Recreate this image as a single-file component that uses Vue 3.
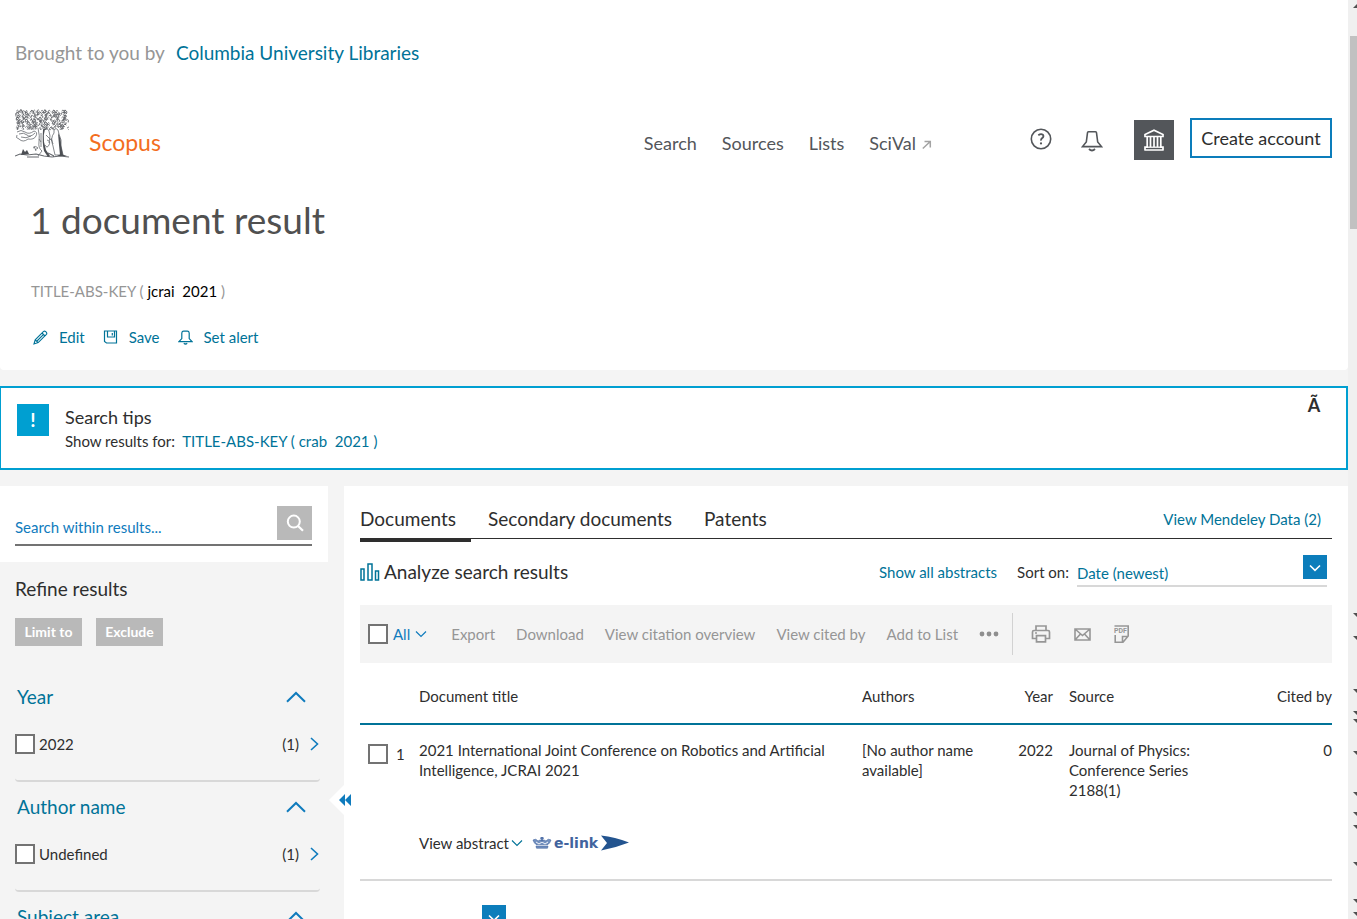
<script setup>
import { ref } from 'vue'

const navLinks = ['Search', 'Sources', 'Lists']
const filters = ref([
  { title: 'Year', option: '2022', count: 1, checked: false },
  { title: 'Author name', option: 'Undefined', count: 1, checked: false },
  { title: 'Subject area', option: 'Physics and Astronomy', count: 1, checked: false }
])
const tools = ['Export', 'Download', 'View citation overview', 'View cited by', 'Add to List']
const railMarks = [613, 636, 689, 711, 719, 751, 792, 812, 825, 862, 899, 912]
const within = ref('')
const sort = ref('Date (newest)')

// Foliage of the tree emblem: rows of small curls with a repeating wobble.
function foliage() {
  let d = ''
  let seed = 7
  const rnd = () => {
    seed = (seed * 73 + 41) % 997
    return seed / 997
  }
  for (let row = 0; row < 8; row++) {
    for (let col = 0; col < 19; col++) {
      const x = 0.5 + col * 2.8 + rnd() * 1.4
      const y = 1.5 + row * 2.4 + rnd() * 1.2
      const r = 0.8 + rnd() * 0.7
      const s = rnd() > 0.5 ? 1 : -1
      d += `M${x.toFixed(1)} ${y.toFixed(1)}q${(r * s).toFixed(1)} ${(-r * 1.6).toFixed(1)} ${(2 * r * s).toFixed(1)} 0t${(-r * s).toFixed(1)} ${r.toFixed(1)}`
    }
  }
  return d
}
const leaves = foliage()
</script>

<template>
  <div class="shell">
    <div class="page">
      <header class="top">
        <p class="brought">Brought to you by <a href="#">Columbia University Libraries</a></p>
        <div class="bar">
          <a class="brand" href="#" aria-label="Scopus home">
            <svg class="tree" viewBox="0 0 54 50" aria-hidden="true">
              <path :d="leaves" fill="none" stroke="#5a5d62" stroke-width=".8" />
              <g fill="none" stroke="#66696e" stroke-width=".8">
                <path d="M2 23q4-3 8 0t9-1q4 1 2 5t-8 3q-5 4-9 0-4-1-2-4M4 25q5-2 8 1t8-2M6 28q5 2 10-1M23 19q2 8 1 14t3 9l-4 5M24 30l2 3M26 24v14" />
                <path d="M39 21q2-3 4 0l1 4q3 6 2 12l2 9h-8l-2-9q-3-8 1-13zM30 21q2-3 4 1l1 5-1 7M31 26l6 6M36 29l2 6M32 31q4 1 2 5t-4 0M18 39q3-3 5 0l-3 2M19 37l2 5" />
                <path d="M0 47l5-2 7 1 9-1 8 2 8 1 8-1 9 1M12 48h12M33 44l6 3" stroke-width="1.1" />
              </g>
              <path d="M28 21q1-2 2-1-2 6-1 13l2 8 4 6-2 1-4-6q-2-8-1-21zM43 24q3 5 3 12l2 10h-3l-1-10zM6 46l2-6 2 3 2-2 2 4zM42 47l4-2 6 2z" fill="#4c4f54" />
            </svg>
            <span>Scopus</span>
          </a>
          <nav class="nav">
            <a v-for="l in navLinks" :key="l" href="#">{{ l }}</a>
            <a href="#">SciVal
              <svg class="out" width="10" height="10" viewBox="0 0 10 10" aria-hidden="true"><path d="M.8 8.5L8 1.7M2.5 1.5H8.3V7.6" fill="none" stroke="#a3a3a3" stroke-width="1.5" /></svg>
            </a>
          </nav>
          <div class="account">
            <button class="icon" aria-label="Help">
              <svg width="22" height="22" viewBox="0 0 22 22"><circle cx="11" cy="11" r="9.7" fill="none" stroke="#53565a" stroke-width="1.6" /><path d="M8.3 7.3Q11 5.2 12.8 6.700 14.4 8.6 12 10.2 10.9 11 11 12.6" fill="none" stroke="#53565a" stroke-width="1.8" /><circle cx="11" cy="15.4" r="1.1" fill="#53565a" /></svg>
            </button>
            <button class="icon bell" aria-label="Alerts">
              <svg width="22" height="22" viewBox="0 0 22 22"><path d="M1.5 16.600H20.500L16.700 12 15.500 2.800Q15.500 1.800 14.500 1.800H7.500Q6.500 1.800 6.500 2.800L5.300 12Z" fill="none" stroke="#53565a" stroke-width="1.600" /><path d="M8 19Q11 22 14 19" fill="none" stroke="#53565a" stroke-width="1.800" /></svg>
            </button>
            <button class="inst" aria-label="Institution">
              <svg width="20" height="22" viewBox="0 0 20 22"><path d="M1 7.500V5.600L10 1.200l9 4.400V7.500ZM1 21v-2.800h2.200V7.500M19 21v-2.800h-2.200V7.500M.300 21h19.400" fill="none" stroke="#fff" stroke-width="1.700" /><path d="M2 18.200h16" stroke="#fff" stroke-width="1.300" /><path d="M6.500 8v10M10 8v10M13.500 8v10" stroke="#fff" stroke-width="1.700" /></svg>
            </button>
            <button class="create">Create account</button>
          </div>
        </div>
        <h1>1 document result</h1>
        <p class="query">TITLE-ABS-KEY ( <b>jcrai &nbsp;2021</b> )</p>
        <div class="actions">
          <button>
            <svg width="15" height="15" viewBox="0 0 15 15" aria-hidden="true"><path d="M1 14L2.2 9.8 10.6 1.4Q11.6.6 12.7 1.7L13.4 2.4Q14.2 3.4 13.4 4.3L5.2 12.6ZM9 3l3 3M2.4 10l2.7 2.6M4 11L10.6 4.4" fill="none" stroke="currentColor" stroke-width="1.100" /></svg>Edit
          </button>
          <button>
            <svg width="15" height="15" viewBox="0 0 15 15" aria-hidden="true"><path d="M1.500 1H13.500V13H3.500L1.500 11.500ZM4.500 1V7H11.500V1M9.300 3v2.400" fill="none" stroke="currentColor" stroke-width="1.200" /></svg>Save
          </button>
          <button>
            <svg width="15" height="15" viewBox="0 0 15 15" aria-hidden="true"><path d="M1 11.600H14L11.200 8.600V3Q11 1.200 9.400 1.200H5.600Q4 1.200 3.800 3V8.600ZM5.800 13.200Q7.500 14.800 9.200 13.200" fill="none" stroke="currentColor" stroke-width="1.200" /></svg>Set alert
          </button>
        </div>
      </header>

      <section class="tips">
        <span class="bang">!</span>
        <div class="tiptext">
          <h2>Search tips</h2>
          <p>Show results for: &nbsp;<a href="#">TITLE-ABS-KEY ( crab &nbsp;2021 )</a></p>
        </div>
        <button class="close" aria-label="Close tips">Ã</button>
      </section>

      <div class="columns">
        <aside>
          <form class="within" @submit.prevent>
            <div class="field">
              <input v-model="within" type="text" placeholder="Search within results..." aria-label="Search within results" />
              <button aria-label="Search">
                <svg width="18" height="18" viewBox="0 0 18 18"><circle cx="7.800" cy="7.600" r="6" fill="none" stroke="#fff" stroke-width="2" /><path d="M12 12l5 4.800" stroke="#fff" stroke-width="2.200" /></svg>
              </button>
            </div>
          </form>
          <div class="refine">
            <h2>Refine results</h2>
            <div class="limit"><button>Limit to</button><button>Exclude</button></div>
            <section v-for="f in filters" :key="f.title" class="facet">
              <button class="facethead">{{ f.title }}
                <svg width="20" height="12" viewBox="0 0 20 12" aria-hidden="true"><path d="M1 10.800L10 2l9 8.800" fill="none" stroke="#0f7bbd" stroke-width="2" /></svg>
              </button>
              <div class="option">
                <label><input v-model="f.checked" type="checkbox" />{{ f.option }}</label>
                <a href="#">({{ f.count }})
                  <svg width="9" height="14" viewBox="0 0 9 14" aria-hidden="true"><path d="M1 1l6.500 6L1 13" fill="none" stroke="#0f7bbd" stroke-width="1.600" /></svg>
                </a>
              </div>
            </section>
          </div>
        </aside>

        <main>
          <button class="collapse" aria-label="Collapse refine panel">
            <svg width="24" height="30" viewBox="0 0 24 30"><path d="M0 15L15 0v30Z" fill="#fff" /><path d="M10 15l6-6v12ZM16 15l6-6v12Z" fill="#0f7bbd" /></svg>
          </button>
          <div class="tabs">
            <a class="on" href="#">Documents</a>
            <a href="#">Secondary documents</a>
            <a href="#">Patents</a>
            <a class="mendeley" href="#">View Mendeley Data (2)</a>
          </div>
          <div class="analyze">
            <a class="chart" href="#">
              <svg width="20" height="18" viewBox="0 0 20 18" aria-hidden="true"><path d="M1 6h3v11H1ZM8 1h4v16H8ZM15.500 8h3v9h-3Z" fill="none" stroke="#007398" stroke-width="1.500" /></svg>Analyze search results
            </a>
            <a class="abstracts" href="#">Show all abstracts</a>
            <label for="sort">Sort on:</label>
            <div class="select">
              <select id="sort" v-model="sort">
                <option>Date (newest)</option>
                <option>Date (oldest)</option>
              </select>
              <svg class="chev" width="24" height="24" viewBox="0 0 24 24" aria-hidden="true"><path fill="#0c7dbb" d="M0 0h24v24H0z" /><path d="M7 10.500l5 4.800 5-4.800" fill="none" stroke="#fff" stroke-width="1.600" /></svg>
            </div>
          </div>
          <div class="toolbar">
            <label class="all"><input type="checkbox" />All
              <svg width="12" height="8" viewBox="0 0 12 8" aria-hidden="true"><path d="M1 1.500l5 5 5-5" fill="none" stroke="#0f7bbd" stroke-width="1.200" /></svg>
            </label>
            <button v-for="t in tools" :key="t">{{ t }}</button>
            <button aria-label="More">
              <svg width="20" height="6" viewBox="0 0 20 6"><g fill="#8e8e8e"><circle cx="3" cy="3" r="2.400" /><circle cx="10" cy="3" r="2.400" /><circle cx="17" cy="3" r="2.400" /></g></svg>
            </button>
            <div class="outputs">
              <button aria-label="Print">
                <svg width="20" height="18" viewBox="0 0 20 18"><path d="M5 13.500H1.500V7Q1.500 5.500 3 5.500H17Q18.500 5.500 18.500 7V13.500H15M5 5.500V1H15V5.500M5.500 10.700H14.500V16.800H5.500ZM4 8h2" fill="none" stroke="#969696" stroke-width="1.700" /></svg>
              </button>
              <button aria-label="Email">
                <svg width="17" height="13" viewBox="0 0 17 13"><path d="M1 1H16V12H1ZM1 1l7.500 6.500L16 1M1 12l5.500-6M16 12l-5.500-6" fill="none" stroke="#969696" stroke-width="1.600" /></svg>
              </button>
              <button aria-label="Save as PDF">
                <svg width="16" height="18" viewBox="0 0 16 18"><path d="M.5 1H14.200V11L9 17.200H1.200V10M8.500 17V11.500H14.200" fill="none" stroke="#969696" stroke-width="1.600" /><text class="pdf" x="0" y="8">PDF</text></svg>
              </button>
            </div>
          </div>
          <table>
            <thead>
              <tr><th class="pick"></th><th>Document title</th><th class="authors">Authors</th><th class="year">Year</th><th class="source">Source</th><th class="cited">Cited by</th></tr>
            </thead>
            <tbody>
              <tr>
                <td><label class="rowpick"><input type="checkbox" />1</label></td>
                <td>2021 International Joint Conference on Robotics and Artificial Intelligence, JCRAI 2021</td>
                <td>[No author name available]</td>
                <td class="year">2022</td>
                <td class="source">Journal of Physics: Conference Series 2188(1)</td>
                <td class="cited">0</td>
              </tr>
              <tr class="links">
                <td></td>
                <td colspan="5">
                  <div class="linkrow">
                    <button>View abstract
                      <svg width="12" height="8" viewBox="0 0 12 8" aria-hidden="true"><path d="M1 1.500l5 5 5-5" fill="none" stroke="#007398" stroke-width="1.100" /></svg>
                    </button>
                    <a class="elink" href="#">
                      <svg width="20" height="12" viewBox="0 0 20 12" aria-hidden="true"><path d="M1 3q3-2 5 1l2-1 1 1h2l1-1 2 1q2-3 5-1-1 3-3 4.500H4Q2 6 1 3ZM9 0h2v4H9ZM8 1.300h4M4 9h12l-.5 2.200h-11Z" fill="#7391c0" stroke="#41639e" stroke-width=".6" /><path d="M4 5l3 2 3-2 3 2 3-2" fill="none" stroke="#fff" stroke-width=".9" /></svg>
                      <span>e-link</span>
                      <svg width="30" height="16" viewBox="0 0 30 16" aria-hidden="true"><path d="M1 .5Q15 2 29 7.500 15 13 1 15.500L7 8Z" fill="#23548f" /></svg>
                    </a>
                  </div>
                </td>
              </tr>
            </tbody>
          </table>
          <button class="perpage" aria-label="Results per page">
            <svg width="24" height="24" viewBox="0 0 24 24"><path d="M7 10.500l5 4.800 5-4.800" fill="none" stroke="#fff" stroke-width="1.600" /></svg>
          </button>
        </main>
      </div>
    </div>
    <div class="rail">
      <span class="thumb"></span>
      <svg class="marks" width="9" height="919" viewBox="0 0 9 919" aria-hidden="true">
        <path d="M5 8l4-4v4Z" fill="#505050" />
        <path v-for="m in railMarks" :key="m" :d="`M5 ${m}h4v4Z`" fill="#505050" />
      </svg>
    </div>
  </div>
</template>

<style>
body { margin: 0; background: #f4f4f4; }
</style>

<style scoped>
* { box-sizing: border-box; }
.shell {
  display: grid;
  grid-template-columns: minmax(0, 1fr) 9px;
  height: 100vh;
  overflow: hidden;
  font: 15px/20px Lato, "Liberation Sans", sans-serif;
  color: #2e2e2e;
  background: #f4f4f4;
}
h1, h2, p { margin: 0; font-weight: 400; }
a { color: #007398; text-decoration: none; }
button { font: inherit; color: inherit; background: none; border: 0; padding: 0; cursor: pointer; }
svg { flex: none; display: block; }
input[type="checkbox"] {
  appearance: none;
  flex: none;
  width: 20px;
  height: 20px;
  margin: 0;
  border: 2px solid #737373;
  background: #fff;
}
.page { min-width: 0; }
.top { height: 370px; padding: 40px 16px 0 15px; background: #fff; border-radius: 0 0 4px 4px; }
.brought { display: flex; gap: 11px; font-size: 19px; line-height: 26px; color: #969696; }
.bar { display: flex; align-items: center; height: 52px; margin-top: 42px; }
.brand { display: flex; align-items: center; gap: 20px; font-size: 23px; color: #f36d21; }
.brand span { padding-top: 16px; }
.tree { width: 54px; height: 50px; }
.nav { display: flex; gap: 25px; margin-left: auto; font-size: 18px; line-height: 24px; padding-top: 18px; }
.nav a { display: flex; align-items: center; gap: 6px; color: #53565a; }
.out { margin-top: 4px; }
.account { display: flex; align-items: center; margin-left: 98px; padding-top: 8px; }
.icon { margin: 2px 29px 0 0; }
.bell { margin-top: 6px; }
.inst { display: grid; place-items: center; width: 40px; height: 40px; background: #53565a; margin: 4px 16px 0 2px; }
.create { width: 142px; height: 40px; border: 2px solid #0c7dbb; font-size: 18px; }
h1 { margin: 34px 0 0 15px; font-size: 37px; line-height: 52px; color: #505050; }
.query { margin: 35px 0 0 16px; color: #969696; }
.query b { font-weight: 400; color: #000; }
.actions { display: flex; gap: 18px; margin: 26px 0 0 18px; color: #007398; }
.actions button { display: flex; align-items: center; gap: 11px; }
.tips { display: flex; margin: 16px 0; height: 84px; padding: 16px 24px 0 16px; background: #fff; border: 2px solid #009fd1; border-left-width: 1px; }
.bang { width: 32px; height: 32px; background: #009fd1; color: #fff; text-align: center; font-size: 19px; line-height: 32px; font-weight: 700; }
.tiptext { flex: 1; padding-left: 16px; }
.tiptext h2 { font-size: 18px; line-height: 27px; }
h2 { font-size: 19px; line-height: 26px; }
.close { align-self: flex-start; width: 16px; margin-top: -9px; font-size: 18px; font-weight: 700; line-height: 20px; }
.columns { display: grid; grid-template-columns: 328px minmax(0, 1fr); gap: 16px; }
.within { height: 76px; background: #fff; padding: 20px 16px 0 15px; }
.field { display: flex; align-items: flex-start; height: 40px; border-bottom: 2px solid #737373; }
.field input { flex: 1; min-width: 0; height: 38px; padding: 4px 0 0; border: 0; outline: 0; background: none; font: inherit; }
.field input::placeholder { color: #0f7bbd; opacity: 1; }
.field button { display: grid; place-items: center; width: 35px; height: 34px; background: #b9b9b9; }
.refine { padding: 14px 8px 0 15px; }
.limit { display: flex; gap: 14px; margin: 16px 0 36px; }
.limit button { width: 67px; height: 28px; background: #b9b9b9; color: #fff; font-weight: 700; font-size: 14px; }
.facet { padding: 2px 0; }
.facet:not(:last-child) { height: 100px; border-bottom: 2px solid #d8d8d8; border-radius: 4px; margin-bottom: 10px; }
.facethead { display: flex; justify-content: space-between; align-items: center; width: 100%; padding: 0 14px 0 2px; font-size: 19px; line-height: 26px; color: #007398; }
.option { display: flex; justify-content: space-between; align-items: center; margin-top: 24px; }
.option label, .option a { display: flex; align-items: center; gap: 4px; color: #2e2e2e; }
.option a { gap: 11px; padding-right: 1px; }
main { position: relative; background: #fff; padding: 16px; height: 100vh; }
.collapse { position: absolute; left: -15px; top: 299px; }
.tabs { display: flex; height: 37px; border-bottom: 1px solid #2e2e2e; font-size: 19px; line-height: 34px; gap: 32px; }
.tabs a { color: #2e2e2e; height: 40px; }
.tabs .on { width: 111px; border-bottom: 4px solid #2e2e2e; margin-right: -15px; }
.tabs .mendeley { margin: 0 11px 0 auto; font-size: 15px; color: #007398; }
.analyze { display: flex; align-items: center; height: 66px; padding: 0 5px 0 0; }
.chart { display: flex; align-items: center; gap: 4px; font-size: 19px; color: #2e2e2e; margin-right: auto; }
.abstracts { margin-right: 20px; }
.select { position: relative; width: 250px; height: 32px; margin: -2px 0 0 8px; border-bottom: 2px solid #d8d8d8; }
.select select { appearance: none; width: 100%; height: 30px; padding: 6px 0 0; border: 0; background: none; font: inherit; color: #007398; outline: 0; }
.chev { position: absolute; right: 0; top: 0; pointer-events: none; }
.toolbar { display: flex; align-items: center; gap: 21px; height: 58px; padding-left: 8px; background: #f4f4f4; color: #969696; }
.all { display: flex; align-items: center; gap: 5px; margin-right: 3px; color: #0f7bbd; }
.outputs { display: flex; align-items: center; gap: 23px; height: 42px; margin-left: -8px; padding-left: 18px; border-left: 1px solid #d2d2d2; }
.pdf { font: 700 7px Roboto, sans-serif; fill: #969696; }
table { width: 100%; table-layout: fixed; border-collapse: collapse; }
th { height: 61px; padding: 6px 0 0; font-weight: 400; text-align: left; border-bottom: 2px solid #007398; vertical-align: middle; }
td { padding: 15px 0 0; vertical-align: top; }
.pick { width: 59px; }
.authors { width: 143px; }
th.year { width: 48px; }
.year, .cited { text-align: right; }
.source { padding-left: 16px; }
th.source { width: 152px; }
th.cited { width: 127px; }
.rowpick { display: flex; align-items: center; gap: 8px; padding: 4px 0 0 8px; }
.links td { padding: 33px 0 26px; border-bottom: 2px solid #d8d8d8; }
.linkrow { display: flex; align-items: center; gap: 9px; }
.linkrow button { display: flex; align-items: center; gap: 2px; }
.elink { display: flex; align-items: center; gap: 2px; color: #41639e; font: 700 14px/16px "DejaVu Sans", sans-serif; }
.perpage { display: block; margin: 24px 0 0 122px; background: #0c7dbb; }
.rail { position: relative; background: #f0f0f0; overflow: hidden; }
.thumb { position: absolute; left: 2px; right: 0; top: 36px; height: 193px; background: #c1c1c1; }
.marks { position: absolute; left: 0; top: 0; }
</style>
